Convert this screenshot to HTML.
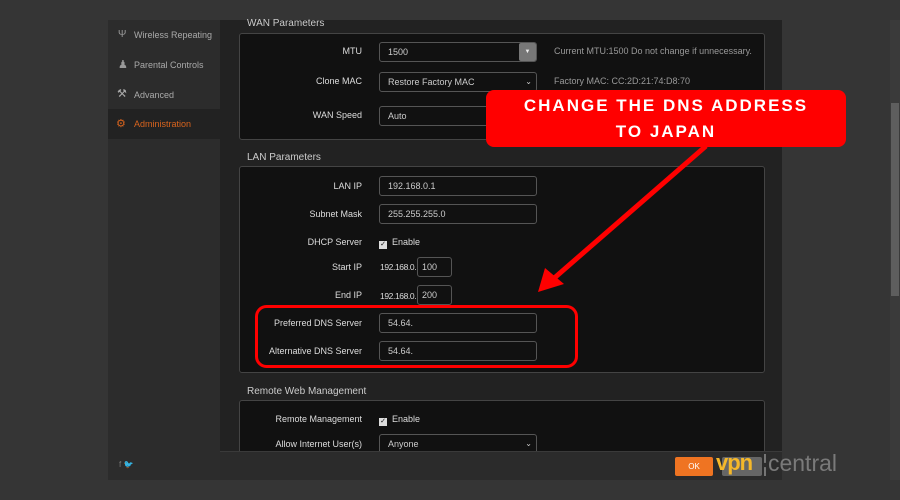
<!DOCTYPE html>
<html><head><style>
*{margin:0;padding:0;box-sizing:border-box}
body{width:900px;height:500px;background:#353535;position:relative;overflow:hidden;font-family:"Liberation Sans",sans-serif;font-size:9px;color:#ddd}
.abs{position:absolute}
.side{left:108px;top:20px;width:112px;height:460px;background:#2c2c2c}
.nav{position:absolute;left:0;width:112px;height:30px;line-height:30px;padding-left:26px;color:#aaa;font-size:9px}
.main{left:220px;top:20px;width:562px;height:431px;background:#222}
.box{position:absolute;background:#111;border:1px solid #444;border-radius:3px}
.lbl{position:absolute;width:150px;text-align:right;color:#ddd;font-size:9px}
.inp{position:absolute;height:20px;border:1px solid #555;border-radius:3px;background:#111;color:#ccc;font-size:9px;line-height:18px;padding-left:8px}
.sec{position:absolute;color:#ccc;font-size:10px}
.note{position:absolute;color:#999;font-size:9px}
.cb{display:inline-block;width:8px;height:8px;background:#ddd;margin-right:5px;vertical-align:-1px;color:#111;font-size:7px;line-height:8px;text-align:center}
</style></head><body>
<div class="abs side">
 <div class="nav" style="top:0">Wireless Repeating</div>
 <div class="nav" style="top:30px">Parental Controls</div>
 <div class="nav" style="top:60px">Advanced</div>
 <div class="nav" style="top:89px;background:#222;color:#d8641e">Administration</div>
 <div class="abs" style="left:10px;top:9px;color:#999;font-size:10px">Ψ</div>
 <div class="abs" style="left:10px;top:38px;color:#999;font-size:11px">♟</div>
 <div class="abs" style="left:9px;top:67px;color:#aaa;font-size:11px">⚒</div>
 <div class="abs" style="left:8px;top:97px;color:#d8641e;font-size:11px">⚙</div>
 <div class="abs" style="left:11px;top:440px;color:#777;font-size:8px">f <span style="color:#889">🐦</span></div>
</div>
<div class="abs main"></div>
<div class="sec" style="left:247px;top:18px">WAN Parameters</div>
<div class="box" style="left:239px;top:33px;width:526px;height:107px"></div>
<div class="lbl" style="left:212px;top:46px">MTU</div>
<div class="inp" style="left:379px;top:42px;width:158px">1500</div>
<div class="abs" style="left:519px;top:43px;width:17px;height:18px;background:#777;border-radius:2px;color:#eee;font-size:6px;text-align:center;line-height:18px">▼</div>
<div class="note" style="left:554px;top:46px">Current MTU:1500 Do not change if unnecessary.</div>
<div class="lbl" style="left:212px;top:76px">Clone MAC</div>
<div class="inp" style="left:379px;top:72px;width:158px">Restore Factory MAC<span style="position:absolute;right:4px;font-size:8px">⌄</span></div>
<div class="note" style="left:554px;top:76px">Factory MAC: CC:2D:21:74:D8:70</div>
<div class="lbl" style="left:212px;top:110px">WAN Speed</div>
<div class="inp" style="left:379px;top:106px;width:158px">Auto</div>

<div class="sec" style="left:247px;top:152px">LAN Parameters</div>
<div class="box" style="left:239px;top:166px;width:526px;height:207px"></div>
<div class="lbl" style="left:212px;top:181px">LAN IP</div>
<div class="inp" style="left:379px;top:176px;width:158px">192.168.0.1</div>
<div class="lbl" style="left:212px;top:209px">Subnet Mask</div>
<div class="inp" style="left:379px;top:204px;width:158px">255.255.255.0</div>
<div class="lbl" style="left:212px;top:237px">DHCP Server</div>
<div class="abs" style="left:379px;top:237px;font-size:9px"><span class="cb">✓</span>Enable</div>
<div class="lbl" style="left:212px;top:262px">Start IP</div>
<div class="abs" style="left:380px;top:262px;font-size:8.5px;letter-spacing:-0.4px">192.168.0.</div>
<div class="inp" style="left:417px;top:257px;width:35px;padding-left:4px">100</div>
<div class="lbl" style="left:212px;top:290px">End IP</div>
<div class="abs" style="left:380px;top:291px;font-size:8.5px;letter-spacing:-0.4px">192.168.0.</div>
<div class="inp" style="left:417px;top:285px;width:35px;padding-left:4px">200</div>
<div class="lbl" style="left:212px;top:318px">Preferred DNS Server</div>
<div class="inp" style="left:379px;top:313px;width:158px">54.64.</div>
<div class="lbl" style="left:212px;top:346px">Alternative DNS Server</div>
<div class="inp" style="left:379px;top:341px;width:158px">54.64.</div>

<div class="sec" style="left:247px;top:386px">Remote Web Management</div>
<div class="box" style="left:239px;top:400px;width:526px;height:60px"></div>
<div class="lbl" style="left:212px;top:414px">Remote Management</div>
<div class="abs" style="left:379px;top:414px"><span class="cb">✓</span>Enable</div>
<div class="lbl" style="left:212px;top:439px">Allow Internet User(s)</div>
<div class="inp" style="left:379px;top:434px;width:158px">Anyone<span style="position:absolute;right:4px;font-size:8px">⌄</span></div>

<div class="abs" style="left:220px;top:451px;width:562px;height:29px;background:#2b2b2b;border-top:1px solid #3a3a3a"></div>
<div class="abs" style="left:675px;top:457px;width:38px;height:19px;background:#ef7422;border-radius:2px;color:#fff;font-size:8px;text-align:center;line-height:19px">OK</div>
<div class="abs" style="left:722px;top:457px;width:40px;height:19px;background:#666;border-radius:2px"></div>
<div class="abs" style="left:716px;top:450px;font-size:22px;line-height:26px;letter-spacing:-1px;color:#f5b82a;font-weight:bold">vpn</div>
<div class="abs" style="left:762px;top:450px;font-size:23px;line-height:26px;color:#7a7a7a">¦central</div>

<div class="abs" style="left:890px;top:20px;width:10px;height:460px;background:#3a3a3a"></div>
<div class="abs" style="left:891px;top:103px;width:8px;height:193px;background:#5e5e5e"></div>

<svg class="abs" style="left:0;top:0" width="900" height="500">
 <line x1="706" y1="146" x2="552" y2="280" stroke="#f00" stroke-width="5"/>
 <polygon points="538,292 545,268 564,284" fill="#f00"/>
 <rect x="256.5" y="306.5" width="320" height="60" rx="10" fill="none" stroke="#f00" stroke-width="3"/>
</svg>
<div class="abs" style="left:486px;top:90px;width:360px;height:57px;background:#f00;border-radius:8px;color:#fff;font-weight:bold;font-size:17px;letter-spacing:2px;text-align:center;line-height:26px;padding-top:3px">CHANGE THE DNS ADDRESS<br>TO JAPAN</div>
</body></html>
